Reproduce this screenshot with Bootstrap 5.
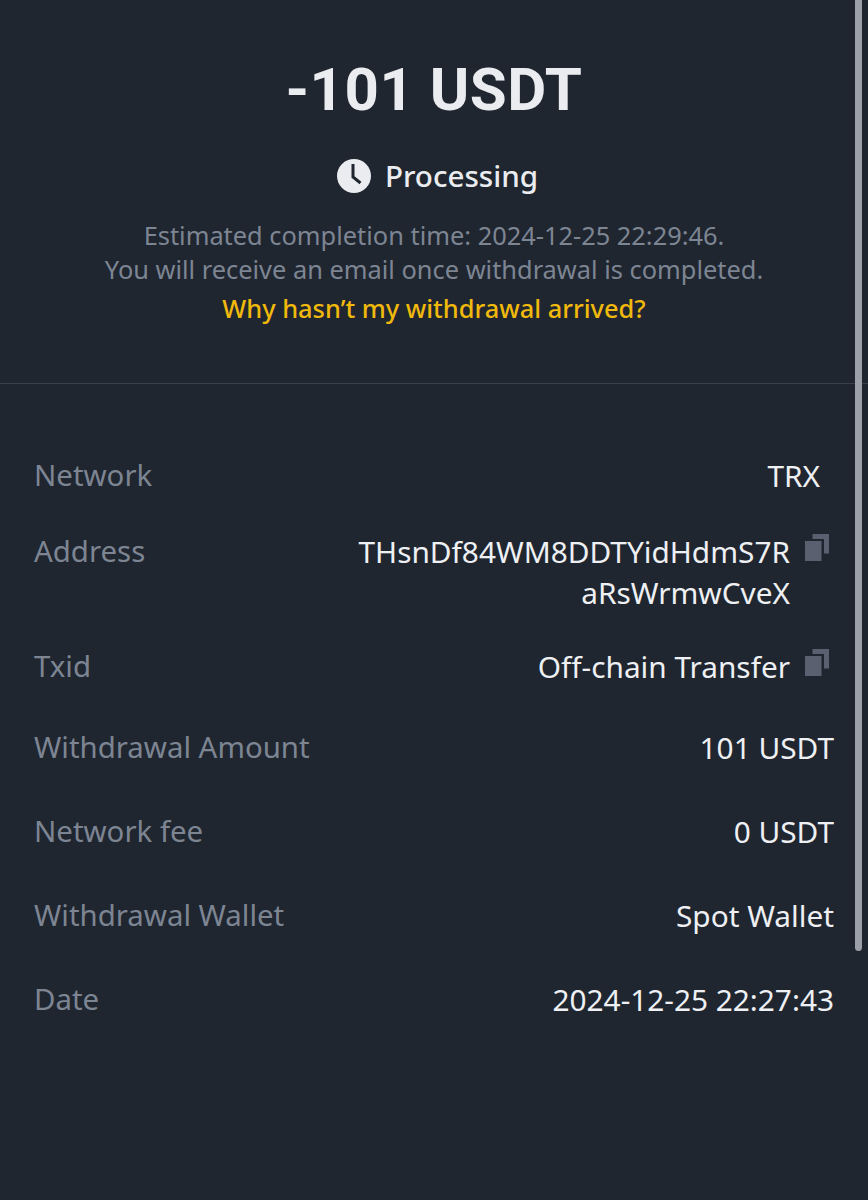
<!DOCTYPE html>
<html lang="en">
  <head>
    <meta charset="UTF-8" />
    <title>Withdrawal Details</title>
    <link href="https://cdn.jsdelivr.net/npm/bootstrap@5.3.3/dist/css/bootstrap.min.css" rel="stylesheet" />
    <style>
      body {
        background: #1f2630;
        font-family: "Noto Sans", Roboto, sans-serif;
        color: #eaecef;
        min-height: 1200px;
        overflow: hidden;
      }
      .summary {
        height: 384px;
        padding-top: 54px;
        border-bottom: 1px solid #3a404a;
      }
      .amount {
        font-family: Roboto, sans-serif;
        font-size: 60px;
        line-height: 72px;
        font-weight: 700;
        letter-spacing: 0.5px;
        color: #eaecef;
        margin: 0;
      }
      .state-line {
        margin-top: 28px;
        height: 44px;
        padding-left: 7px;
        font-size: 29.6px;
        font-weight: 500;
        gap: 14px;
      }
      .state-line svg { width: 34px; height: 34px; }
      .note {
        font-size: 25.4px;
        line-height: 34px;
        color: #7d8593;
        margin: 20px 0 0;
      }
      .help-link {
        display: block;
        font-size: 25.4px;
        line-height: 34px;
        font-weight: 500;
        color: #f0b90b;
        text-decoration: none;
        margin-top: 5px;
      }
      .details { padding: 71px 34px 0; }
      .info-row {
        line-height: 41px;
      }
      .info-row dt { font-size: 29.4px; font-weight: 400; color: #7d8593; margin: 0; }
      .info-row dd { font-size: 29.8px; color: #eef0f3; margin: 0; text-align: right; }
      .gap-address { margin-top: 35px; }
      .gap-txid { margin-top: 33px; }
      .gap-amount { margin-top: 40px; }
      .gap-plain { margin-top: 43px; }
      .inset-trx { padding-right: 14px; }
      .inset-copy { padding-right: 5px; }
      .copy-icon { width: 24px; height: 27px; flex-shrink: 0; margin-left: 15px; margin-top: 3px; }
      .scroll-thumb {
        position: absolute;
        top: 0;
        left: 855px;
        width: 7px;
        height: 951px;
        background: #9ba0a8;
        border-radius: 0 0 4px 4px;
      }
    </style>
  </head>
  <body>
    <section class="summary text-center">
      <h1 class="amount">-101 USDT</h1>
      <div class="state-line d-flex justify-content-center align-items-center">
        <svg viewBox="0 0 34 34" aria-hidden="true"><circle cx="17" cy="17" r="17" fill="#eaecef"/><path d="M16 5v13l7.5 6" fill="none" stroke="#1f2630" stroke-width="3"/></svg>
        <span>Processing</span>
      </div>
      <p class="note">Estimated completion time: 2024-12-25 22:29:46.<br />You will receive an email once withdrawal is completed.</p>
      <a class="help-link" href="#">Why hasn’t my withdrawal arrived?</a>
    </section>
    <dl class="details m-0">
      <div class="info-row d-flex justify-content-between">
        <dt>Network</dt>
        <dd class="inset-trx">TRX</dd>
      </div>
      <div class="info-row gap-address d-flex justify-content-between">
        <dt>Address</dt>
        <dd class="inset-copy d-flex align-items-start">
          <span>THsnDf84WM8DDTYidHdmS7R<br />aRsWrmwCveX</span>
          <svg class="copy-icon" viewBox="0 0 24 27" aria-hidden="true"><path d="M7.5 0H24v19.500h-5V5H7.500z" fill="#5a6070"/><rect x="0" y="7" width="16.500" height="20" fill="#5a6070"/></svg>
        </dd>
      </div>
      <div class="info-row gap-txid d-flex justify-content-between">
        <dt>Txid</dt>
        <dd class="inset-copy d-flex align-items-start">
          <span>Off-chain Transfer</span>
          <svg class="copy-icon" viewBox="0 0 24 27" aria-hidden="true"><path d="M7.5 0H24v19.500h-5V5H7.500z" fill="#5a6070"/><rect x="0" y="7" width="16.500" height="20" fill="#5a6070"/></svg>
        </dd>
      </div>
      <div class="info-row gap-amount d-flex justify-content-between">
        <dt>Withdrawal Amount</dt>
        <dd>101 USDT</dd>
      </div>
      <div class="info-row gap-plain d-flex justify-content-between">
        <dt>Network fee</dt>
        <dd>0 USDT</dd>
      </div>
      <div class="info-row gap-plain d-flex justify-content-between">
        <dt>Withdrawal Wallet</dt>
        <dd>Spot Wallet</dd>
      </div>
      <div class="info-row gap-plain d-flex justify-content-between">
        <dt>Date</dt>
        <dd>2024-12-25 22:27:43</dd>
      </div>
    </dl>
    <div class="scroll-thumb"></div>
    <script src="https://cdn.jsdelivr.net/npm/bootstrap@5.3.3/dist/js/bootstrap.bundle.min.js"></script>
  </body>
</html>
